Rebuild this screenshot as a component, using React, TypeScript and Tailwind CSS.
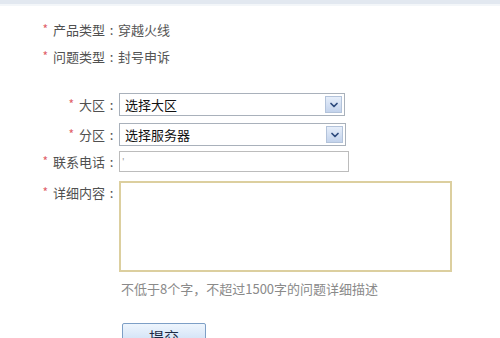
import { ChevronDown } from "lucide-react";

type RowProps = {
    label: string
    children: React.ReactNode
    className?: string
    labelClass?: string
}

function Row({ label, children, className, labelClass }: RowProps) {
    return (
        <div className={"flex " + (className ?? "")}>
            <div className={"w-[118px] shrink-0 text-right text-[#505050] " + (labelClass ?? "")}>
                <span className="text-[#e0606a] text-[12px] mr-[5px] align-top relative top-[-1px]">*</span>
                {label}
                <span className="inline-block w-[13px] text-center">:</span>
            </div>
            {children}
        </div>
    )
}

function FakeSelect({ text, width }: { text: string; width: string }) {
    return (
        <div className={"h-[23px] border border-[#a9b1bb] bg-white flex items-center pl-[5px] pr-[2px] " + width}>
            <span className="flex-1 text-[#111] text-[13px]">{text}</span>
            <span className="w-[17px] h-[17px] border border-[#b3c3da] bg-gradient-to-b from-[#e6eefa] to-[#c3d3ec] flex items-center justify-center">
                <ChevronDown className="w-[12px] h-[12px] text-[#2d4a7c]" strokeWidth={3.5} />
            </span>
        </div>
    )
}

export default function App() {
    return (
        <div className="w-[500px] h-[338px] overflow-hidden bg-white text-[13px] leading-[20px] font-['Noto_Sans_CJK_SC',sans-serif]">
            <div className="h-[4px] bg-[#e2e8f0]" />
            <div className="h-[2px] bg-[#f3f6f9]" />
            <Row label="产品类型" className="mt-[14px] items-center h-[20px]" labelClass="pl-[36px] text-left w-[118px]">
                <span className="text-[#555]">穿越火线</span>
            </Row>
            <Row label="问题类型" className="mt-[7px] items-center h-[20px]" labelClass="pl-[36px] text-left w-[118px]">
                <span className="text-[#555]">封号申诉</span>
            </Row>
            <Row label="大区" className="mt-[26px] items-center">
                <div className="ml-[1px]"><FakeSelect text="选择大区" width="w-[226px]" /></div>
            </Row>
            <Row label="分区" className="mt-[7px] items-center">
                <div className="ml-[1px]"><FakeSelect text="选择服务器" width="w-[227px]" /></div>
            </Row>
            <Row label="联系电话" className="mt-[5px] items-center">
                <div className="ml-[1px] w-[230px] h-[21px] border border-[#bcbcbc] bg-white flex items-center pl-[2px]">
                    <span className="text-[9px] text-[#999] leading-none">'</span>
                </div>
            </Row>
            <Row label="详细内容" className="mt-[9px] items-start" labelClass="pt-[2px]">
                <div className="ml-[1px] w-[333px] h-[91px] border-2 border-[#dccf9f] bg-white" />
            </Row>
            <div className="mt-[9px] pl-[121px] text-[#8a8a8a] leading-[16px]">
                不低于8个字，不超过1500字的问题详细描述
            </div>
            <div className="mt-[26px] pl-[122px]">
                <button className="w-[84px] h-[26px] border border-[#7d9fc6] rounded-[2px] bg-gradient-to-b from-[#eef5fd] to-[#c5daf2] text-[#1c2a44] text-[15px] leading-[22px] pt-[2px]">
                    提交
                </button>
            </div>
        </div>
    )
}
